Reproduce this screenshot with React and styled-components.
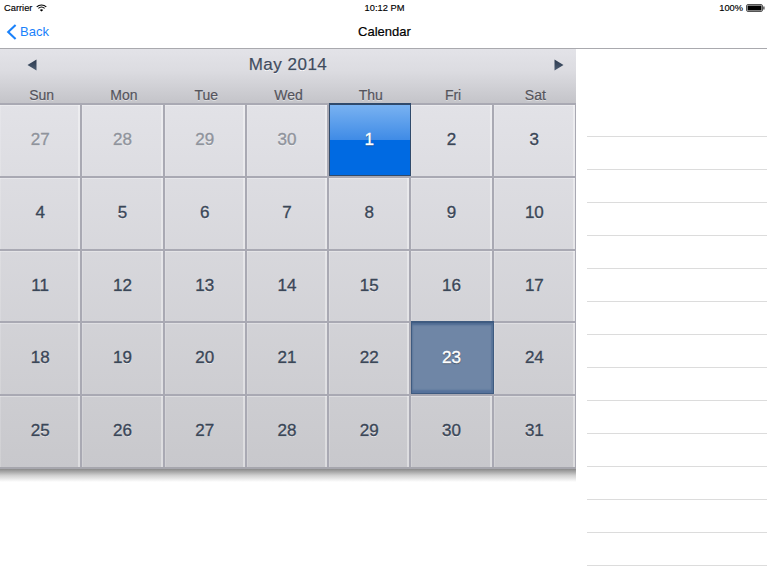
import React from "react";
import styled, { createGlobalStyle } from "styled-components";

const Global = createGlobalStyle`
  html, body { margin: 0; padding: 0; background: #fff; }
  body { font-family: "Liberation Sans", Arial, sans-serif; overflow: hidden; }
`;

const Page = styled.div`
  width: 767px;
  height: 572px;
  display: flex;
  flex-direction: column;
  overflow: hidden;
  background: #fff;
`;

const StatusBar = styled.div`
  height: 16px;
  padding: 0 2px 0 4px;
  display: grid;
  grid-template-columns: 1fr auto 1fr;
  align-items: center;
  font-size: 9.3px;
  color: #000;
  -webkit-text-stroke: 0.15px #000;
`;
const StatusLeft = styled.div`
  display: flex;
  align-items: center;
  gap: 4px;
`;
const StatusRight = styled.div`
  display: flex;
  justify-content: flex-end;
  align-items: center;
  gap: 3px;
`;

const NavBar = styled.div`
  height: 33px;
  box-sizing: border-box;
  padding-bottom: 1px;
  border-bottom: 1px solid #a9a9ae;
  display: grid;
  grid-template-columns: 1fr auto 1fr;
  align-items: center;
`;
const BackButton = styled.div`
  display: flex;
  align-items: center;
  gap: 3px;
  padding-left: 6px;
  color: #1a82fb;
  font-size: 13px;
`;
const NavTitle = styled.div`
  font-size: 13px;
  padding-left: 2px;
  -webkit-text-stroke: 0.2px #000;
  color: #000;
`;

const Body = styled.div`
  flex: 1;
  display: flex;
  min-height: 0;
`;
const CalendarColumn = styled.div`
  width: 576px;
  flex: none;
`;
const CalendarHeader = styled.div`
  height: 54px;
  box-sizing: border-box;
  background: linear-gradient(#e3e3e8 0%, #dcdce1 40%, #c4c4c9 100%);
  display: flex;
  flex-direction: column;
`;
const MonthRow = styled.div`
  height: 32px;
  display: grid;
  grid-template-columns: 1fr auto 1fr;
  align-items: center;
`;
const ArrowSlot = styled.div`
  display: flex;
  justify-content: ${(p) => (p.$end ? "flex-end" : "flex-start")};
  padding: ${(p) => (p.$end ? "0 12px 0 0" : "0 0 0 27px")};
`;
const MonthLabel = styled.div`
  font-size: 17px;
  letter-spacing: 0.5px;
  color: #3f4b5e;
  -webkit-text-stroke: 0.25px #3f4b5e;
  text-shadow: 0 1px 0 #fff;
`;
const Weekdays = styled.div`
  display: grid;
  grid-template-columns: repeat(7, 1fr);
`;
const Weekday = styled.div`
  text-align: center;
  font-size: 14px;
  line-height: 16px;
  padding: 6px 0 0 1px;
  color: #54545c;
  -webkit-text-stroke: 0.2px #54545c;
  text-shadow: 0 1px 0 rgba(255, 255, 255, 0.45);
`;
const Grid = styled.div`
  display: grid;
  grid-template-columns: repeat(7, 1fr);
  grid-template-rows: 73px 73px 72px 73px 73px;
  background: linear-gradient(#e2e2e7, #c8c8cc);
`;
const Day = styled.div`
  box-sizing: border-box;
  display: flex;
  align-items: center;
  justify-content: center;
  padding-bottom: 1px;
  font-size: 17px;
  border-top: 2px solid #a9a9b3;
  border-right: 2px solid #a9a9b3;
  box-shadow: inset 0 1px 0 rgba(255, 255, 255, 0.3), inset -2px 0 0 rgba(255, 255, 255, 0.38), inset 1px 0 0 rgba(255, 255, 255, 0.15);
  color: ${(p) => (p.$muted ? "#8f939c" : "#3a4657")};
  -webkit-text-stroke: 0.35px ${(p) => (p.$muted ? "#8f939c" : "#3a4657")};
  text-shadow: 0 1px 0 rgba(255, 255, 255, 0.7);
  ${(p) => p.$last && "border-right-width: 1px;"}
  ${(p) =>
    p.$today &&
    `
    background: linear-gradient(#79b2f1 0%, #3f8be6 50%, #006ae2 50%, #006ae2 100%);
    color: #fff;
    -webkit-text-stroke: 0.35px #fff;
    border: 1px solid #304a6b;
    border-top-width: 2px;
    padding-right: 2px;
    box-shadow: none;
    text-shadow: 0 1px 1px rgba(0,0,0,0.5);
  `}
  ${(p) =>
    p.$selected &&
    `
    background: #6f86a6;
    color: #fff;
    -webkit-text-stroke: 0.35px #fff;
    border: 1px solid #3f5b80;
    border-top-width: 2px;
    padding-right: 2px;
    box-shadow: inset 0 2px 2px #4e6b92, inset 0 -3px 2px #55719a, inset -4px 0 1px -2px #5d789c;
    text-shadow: 0 1px 1px rgba(0,0,0,0.5);
  `}
`;
const GridEnd = styled.div`
  height: 2px;
  background: #a6a6ad;
`;
const BottomShadow = styled.div`
  height: 13px;
  background: linear-gradient(#8a8a8a, #d0d0d0 50%, #fff);
`;
const Side = styled.div`
  flex: 1;
  padding: 55px 0 0 11px;
  min-width: 0;
`;
const SideRow = styled.div`
  height: 33px;
  box-sizing: border-box;
  border-bottom: 1px solid #dcdcdc;
`;

const WifiIcon = () => (
  <svg width="11" height="8" viewBox="0 0 11 8" fill="none" stroke="#000">
    <path d="M0.7 2.8C3.4 0.3 7.6 0.3 10.3 2.8" strokeWidth="1.1" />
    <path d="M2.4 4.4C4.2 2.8 6.8 2.8 8.6 4.4" strokeWidth="1.1" />
    <path d="M5.5 7.6L3.8 5.9C4.8 5.1 6.2 5.1 7.2 5.9Z" fill="#000" stroke="none" />
  </svg>
);
const BatteryIcon = () => (
  <svg width="19" height="8" viewBox="0 0 19 8">
    <rect x="0.5" y="0.5" width="16" height="7" rx="1.5" fill="#fff" stroke="#555" />
    <rect x="1.5" y="1.5" width="14" height="5" fill="#000" />
    <rect x="17.3" y="2.5" width="1.2" height="3" fill="#333" />
  </svg>
);
const BackIcon = () => (
  <svg width="11" height="16" viewBox="0 0 11 16" fill="none">
    <path d="M9.6 1L2.2 8L9.6 15" stroke="#1a82fb" strokeWidth="2.1" />
  </svg>
);
const Arrow = ({ right }) => (
  <svg width="10" height="12" viewBox="0 0 10 12">
    <defs>
      <linearGradient id="arr" x1="0" y1="0" x2="0" y2="1">
        <stop offset="0" stopColor="#2c3a4e" />
        <stop offset="1" stopColor="#4c5c72" />
      </linearGradient>
    </defs>
    <path d={right ? "M0.5 0.5L9.5 6L0.5 11.5Z" : "M9.5 0.5L0.5 6L9.5 11.5Z"} fill="url(#arr)" />
  </svg>
);

const weekdays = ["Sun", "Mon", "Tue", "Wed", "Thu", "Fri", "Sat"];
const days = [27, 28, 29, 30, ...Array.from({ length: 31 }, (_, i) => i + 1)];

export default function App() {
  return (
    <Page>
      <Global />
      <StatusBar>
        <StatusLeft>
          <span>Carrier</span>
          <WifiIcon />
        </StatusLeft>
        <span>10:12 PM</span>
        <StatusRight>
          <span>100%</span>
          <BatteryIcon />
        </StatusRight>
      </StatusBar>
      <NavBar>
        <BackButton>
          <BackIcon />
          <span>Back</span>
        </BackButton>
        <NavTitle>Calendar</NavTitle>
        <span />
      </NavBar>
      <Body>
        <CalendarColumn>
          <CalendarHeader>
            <MonthRow>
              <ArrowSlot>
                <Arrow />
              </ArrowSlot>
              <MonthLabel>May 2014</MonthLabel>
              <ArrowSlot $end>
                <Arrow right />
              </ArrowSlot>
            </MonthRow>
            <Weekdays>
              {weekdays.map((d) => (
                <Weekday key={d}>{d}</Weekday>
              ))}
            </Weekdays>
          </CalendarHeader>
          <Grid>
            {days.map((d, i) => (
              <Day
                key={i}
                $last={i % 7 === 6}
                $muted={i < 4}
                $today={i === 4}
                $selected={i === 26}
              >
                {d}
              </Day>
            ))}
          </Grid>
          <GridEnd />
          <BottomShadow />
        </CalendarColumn>
        <Side>
          {Array.from({ length: 14 }, (_, i) => (
            <SideRow key={i} />
          ))}
        </Side>
      </Body>
    </Page>
  );
}
